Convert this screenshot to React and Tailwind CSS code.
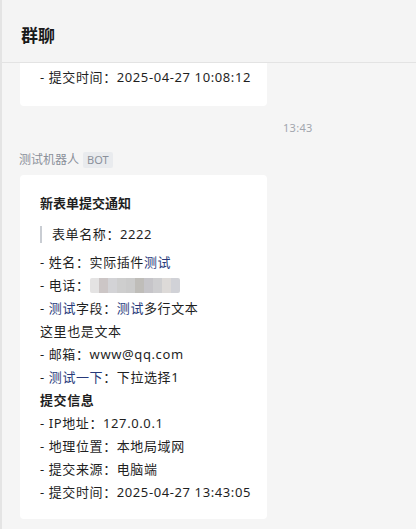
import React from 'react';

const font = { fontFamily: '"Noto Sans", "Noto Sans CJK SC", sans-serif' };

const mosaic = [
  '#e2e0e0', '#c7c0c0', '#cfcfd2', '#c9c9c9', '#c6c6c6', '#b9b6b2', '#c0bfc4', '#c9c9cc', '#dad6d4', '#cdced3',
];

const Blurred = () => (
  <span className="inline-flex h-[15px] align-middle overflow-hidden rounded-[2px] opacity-90">
    {mosaic.map((c, i) => (
      <span key={i} className="w-[9px] h-full" style={{ backgroundColor: c }} />
    ))}
  </span>
);

const Hl = ({ children }) => <span className="text-[#27397a]">{children}</span>;

const Line = ({ children, className = '' }) => (
  <div className={`leading-[23px] tracking-[0.6px] ${className}`}>{children}</div>
);

export default function App() {
  return (
    <div
      className="w-full h-[529px] bg-[#f5f5f5] border-l-2 border-[#e4e4e4] overflow-hidden flex flex-col text-[#1f1f1f]"
      style={font}
    >
      {/* header */}
      <div className="h-[63px] shrink-0 border-b border-[#e3e3e3] bg-[#f4f4f4] flex items-center pl-[19px] pt-[10px]">
        <h1 className="text-[17px] font-bold text-[#1a1a1a]">群聊</h1>
      </div>

      {/* chat */}
      <div className="flex flex-col">
        <div className="ml-[18px] w-[247px] bg-white rounded-b-[4px] pl-[20px] pt-[3px] pb-[17px] text-[13px]">
          <Line>- 提交时间：2025-04-27 10:08:12</Line>
        </div>

        <div className="pl-[281px] pt-[14px] text-[11px] text-[#a2a6ae] leading-[16px] tracking-[0.3px]">13:43</div>

        <div className="flex items-center gap-[4px] pl-[17px] pt-[16px]">
          <span className="text-[12px] text-[#8b909a] leading-[16px]">测试机器人</span>
          <span className="bg-[#e9ebee] text-[#8b909a] text-[11px] leading-[16px] px-[4px] rounded-[2px]">BOT</span>
        </div>

        <div className="ml-[18px] mt-[7px] w-[247px] bg-white rounded-[4px] pl-[20px] pt-[17px] pb-[15px] text-[13px]">
          <div className="font-bold leading-[23px] mb-[8px]">新表单提交通知</div>
          <div className="flex items-center gap-[10px] mb-[5px]">
            <span className="w-[2px] h-[17px] bg-[#c9cdd3]" />
            <span className="leading-[23px] tracking-[0.6px]">表单名称：2222</span>
          </div>
          <Line>- 姓名：实际插件<Hl>测试</Hl></Line>
          <Line className="flex items-center">- 电话：<Blurred /></Line>
          <Line>- <Hl>测试</Hl>字段：<Hl>测试</Hl>多行文本</Line>
          <Line>这里也是文本</Line>
          <Line>- 邮箱：www@qq.com</Line>
          <Line>- <Hl>测试一下</Hl>：下拉选择1</Line>
          <Line className="font-bold">提交信息</Line>
          <Line>- IP地址：127.0.0.1</Line>
          <Line>- 地理位置：本地局域网</Line>
          <Line>- 提交来源：电脑端</Line>
          <Line>- 提交时间：2025-04-27 13:43:05</Line>
        </div>
      </div>
    </div>
  );
}
